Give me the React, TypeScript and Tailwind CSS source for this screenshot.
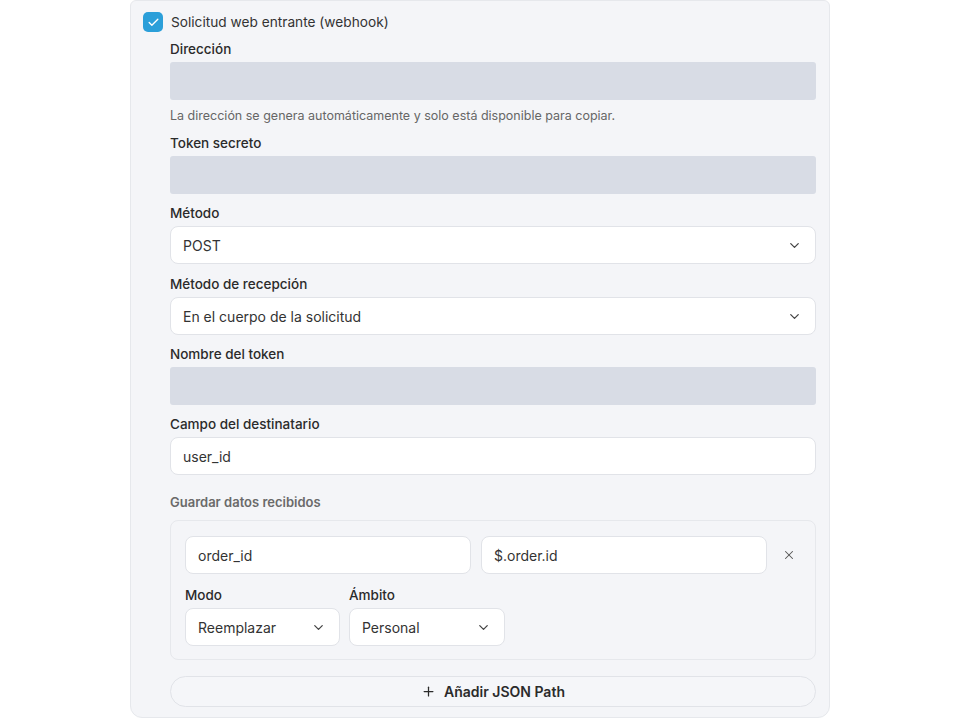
import { ChevronDown, X, Plus, Check } from 'lucide-react';

function Label({ children }: { children: React.ReactNode }) {
  return <div className="mb-[3px] text-[13.5px] font-medium leading-5 text-[#2b2b2b]">{children}</div>;
}

function ReadOnlyInput() {
  return <div className="h-[38px] w-full rounded-[3px] bg-[#d8dce5]" />;
}

function TextInput({ value }: { value: string }) {
  return (
    <div className="flex h-[38px] w-full items-center rounded-lg border border-[#e1e3e8] bg-white px-3 text-[14px] text-[#333]">
      {value}
    </div>
  );
}

function SelectBox({ value, className = '' }: { value: string; className?: string }) {
  return (
    <div
      className={`flex h-[38px] items-center justify-between rounded-lg border border-[#e1e3e8] bg-white pl-3 pr-[13px] text-[14px] text-[#333] ${className}`}
    >
      <span>{value}</span>
      <ChevronDown size={15} strokeWidth={2} className="text-[#444]" />
    </div>
  );
}

export default function App() {
  return (
    <div className="min-h-screen bg-white" style={{ fontFamily: 'Inter, "Noto Sans", sans-serif' }}>
      <div className="mx-auto w-[700px] rounded-b-xl rounded-t-md border border-[#e6e8ec] bg-[#f4f5f8] pb-[10px] pl-3 pr-[13px] pt-[11px]">
        <div className="flex items-center gap-2">
          <div className="flex h-5 w-5 items-center justify-center rounded-[5px] bg-[#2b9fd9]">
            <Check size={13} strokeWidth={2.5} className="text-white" />
          </div>
          <span className="text-[13.7px] leading-5 text-[#333]">Solicitud web entrante (webhook)</span>
        </div>

        <div className="ml-[27px] mt-[7px] flex flex-col gap-[9px]">
          <div>
            <Label>Dirección</Label>
            <ReadOnlyInput />
            <p className="mt-[8px] text-[12.5px] leading-4 text-[#666]">
              La dirección se genera automáticamente y solo está disponible para copiar.
            </p>
          </div>
          <div>
            <Label>Token secreto</Label>
            <ReadOnlyInput />
          </div>
          <div>
            <Label>Método</Label>
            <SelectBox value="POST" />
          </div>
          <div className="mt-[1px]">
            <Label>Método de recepción</Label>
            <SelectBox value="En el cuerpo de la solicitud" />
          </div>
          <div>
            <Label>Nombre del token</Label>
            <ReadOnlyInput />
          </div>
          <div>
            <Label>Campo del destinatario</Label>
            <TextInput value="user_id" />
          </div>

          <div className="mt-[10px]">
            <div className="mb-[10px] text-[13px] font-semibold leading-4 text-[#6a6a6a]">Guardar datos recibidos</div>
            <div className="rounded-lg border border-[#e6e8ec] px-[14px] pb-[13px] pt-[15px]">
              <div className="flex items-center gap-[10px]">
                <TextInput value="order_id" />
                <TextInput value="$.order.id" />
                <button className="flex h-6 w-6 shrink-0 items-center justify-center text-[#555]">
                  <X size={14} strokeWidth={1.75} />
                </button>
              </div>
              <div className="mt-[11px] flex gap-[9px]">
                <div>
                  <Label>Modo</Label>
                  <SelectBox value="Reemplazar" className="w-[155px]" />
                </div>
                <div>
                  <Label>Ámbito</Label>
                  <SelectBox value="Personal" className="w-[156px]" />
                </div>
              </div>
            </div>
          </div>

          <button className="mt-[7px] flex h-[31px] w-full items-center justify-center gap-2 rounded-full border border-[#e1e3e8] bg-[#f5f6f9] text-[14px] font-semibold text-[#2b2b2b]">
            <Plus size={15} strokeWidth={2} />
            Añadir JSON Path
          </button>
        </div>
      </div>
    </div>
  );
}
